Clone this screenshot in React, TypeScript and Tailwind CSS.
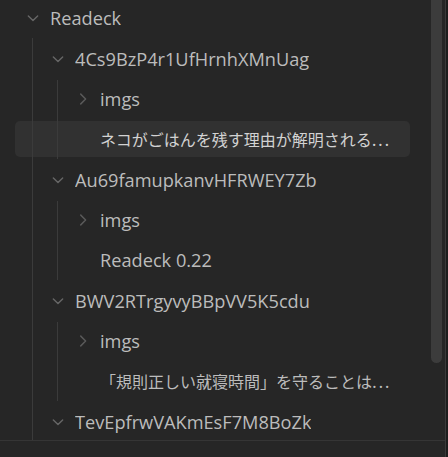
import React from "react";

type Node = {
  name: string;
  folder?: boolean;
  open?: boolean;
  active?: boolean;
  cjk?: boolean;
  children?: Node[];
};

const tree: Node = {
  name: "Readeck",
  folder: true,
  open: true,
  children: [
    {
      name: "4Cs9BzP4r1UfHrnhXMnUag",
      folder: true,
      open: true,
      children: [
        { name: "imgs", folder: true },
        { name: "ネコがごはんを残す理由が解明される", active: true, cjk: true },
      ],
    },
    {
      name: "Au69famupkanvHFRWEY7Zb",
      folder: true,
      open: true,
      children: [
        { name: "imgs", folder: true },
        { name: "Readeck 0.22" },
      ],
    },
    {
      name: "BWV2RTrgyvyBBpVV5K5cdu",
      folder: true,
      open: true,
      children: [
        { name: "imgs", folder: true },
        { name: "「規則正しい就寝時間」を守ることは", cjk: true },
      ],
    },
    {
      name: "TevEpfrwVAKmEsF7M8BoZk",
      folder: true,
      open: true,
      children: [],
    },
  ],
};

const folderPad = ["pl-[9px]", "pl-[34px]", "pl-[59px]", "pl-[84px]"];
const filePad = ["pl-[35px]", "pl-[60px]", "pl-[85px]", "pl-[110px]"];
const guideLeft = ["left-[17px]", "left-[42px]", "left-[67px]", "left-[92px]"];

function Chevron({ open }: { open?: boolean }) {
  return (
    <svg
      width="24"
      height="24"
      viewBox="0 0 24 24"
      fill="none"
      stroke="currentColor"
      strokeWidth="1.9"
      strokeLinecap="round"
      strokeLinejoin="round"
    >
      {open ? <path d="m5.8 9.2 6.2 6.2 6.2-6.2" /> : <path d="m9 5.5 6.5 6.5-6.5 6.5" />}
    </svg>
  );
}

function Item({ node, level }: { node: Node; level: number }) {
  const rowCls = node.folder ? folderPad[level] : filePad[level];
  return (
    <div>
      <div className="py-[2.2px]">
        <div
          className={`flex items-center h-[36px] rounded-[5px] pr-[8px] ${rowCls} ${
            node.active ? "bg-[#313131] text-[#d2d2d2]" : "text-[#bcbcbc]"
          }`}
        >
          {node.folder && (
            <span
              className={`w-[18px] h-[24px] flex items-center justify-center mr-[8px] shrink-0 ${
                node.open ? "text-[#666666]" : "text-[#5a5a5a]"
              }`}
            >
              <Chevron open={node.open} />
            </span>
          )}
          {node.cjk ? (
            <span className="whitespace-nowrap overflow-hidden text-[16px] leading-[22px]">
              {node.name}
              <span className="text-[18.2px] tracking-[1.6px]">...</span>
            </span>
          ) : (
            <span className="truncate whitespace-nowrap text-[18.2px] leading-[24px]">{node.name}</span>
          )}
        </div>
      </div>
      {node.folder && node.open && node.children && node.children.length > 0 && (
        <div className="relative">
          {node.children.map((c, i) => (
            <Item key={i} node={c} level={level + 1} />
          ))}
          <div className={`absolute top-[1px] bottom-[1px] w-px bg-[#3b3b3b] ${guideLeft[level]}`} />
        </div>
      )}
    </div>
  );
}

export default function App() {
  return (
    <div className="flex w-[448px] h-[457px] bg-[#262626] overflow-hidden font-['Open_Sans','Noto_Sans_CJK_JP',sans-serif]">
      <div className="flex flex-col w-[445px]">
        <div className="flex h-[441px] border-b border-[#353535] overflow-hidden">
          <div className="relative flex-1 min-w-0 pl-[15px] pr-[21px] overflow-hidden">
            <div className="-mt-[2px]">
              <Item node={tree} level={0} />
            </div>
            <div className="absolute left-[32px] top-[38px] bottom-0 w-px bg-[#3b3b3b]" />
          </div>
          <div className="w-[11px] mr-[3px] shrink-0">
            <div className="h-[363px] bg-[#3c3c3c] rounded-b-[6px]" />
          </div>
        </div>
        <div className="flex-1" />
      </div>
      <div className="w-px bg-[#3a3a3a]" />
      <div className="flex-1 bg-[#1d1d1d]" />
    </div>
  );
}
